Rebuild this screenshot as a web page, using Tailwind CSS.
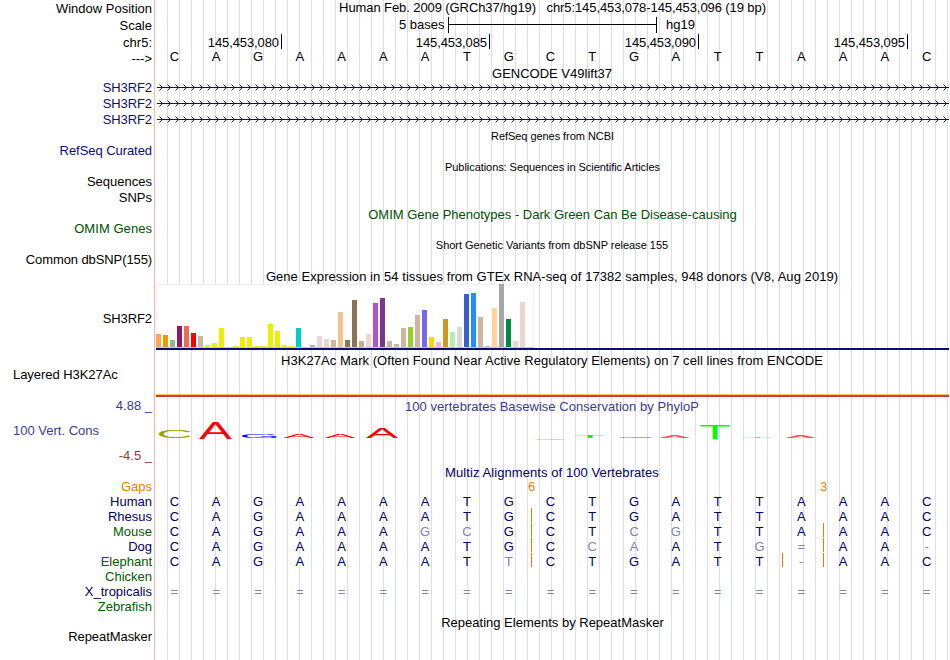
<!DOCTYPE html>
<html lang="en">
<head>
<meta charset="UTF-8">
<meta name="viewport" content="width=device-width, initial-scale=1.0">
<title>hg19 chr5:145,453,078-145,453,096</title>
<script src="https://cdn.jsdelivr.net/npm/@tailwindcss/browser@4"></script>
</head>
<body class="bg-white">
<div class="flex w-[950px] h-[660px] overflow-hidden font-['Liberation_Sans',Arial,sans-serif] text-[13px] leading-[15px] text-black whitespace-nowrap">

    <!-- Track labels -->
    <div class="flex flex-col w-[155px] shrink-0 pt-px pr-[2px] text-right border-r border-[#ffb0b0]">
        <div class="h-[17px]">Window Position</div>
        <div class="h-[17px]">Scale</div>
        <div class="h-4">chr5:</div>
        <div class="h-[29px]">---&gt;</div>
        <div class="h-4 text-[#0c0c78] tracking-[-0.1px]">SH3RF2</div>
        <div class="h-4 text-[#0c0c78] tracking-[-0.1px]">SH3RF2</div>
        <div class="h-[31px] text-[#0c0c78] tracking-[-0.1px]">SH3RF2</div>
        <div class="h-[31px] text-[#0c0c78] tracking-[-0.06px]">RefSeq Curated</div>
        <div class="h-4">Sequences</div>
        <div class="h-[31px]">SNPs</div>
        <div class="h-[31px] text-[#005000] tracking-[0.05px]">OMIM Genes</div>
        <div class="h-[59px] tracking-[-0.1px]">Common dbSNP(155)</div>
        <div class="h-14 tracking-[-0.1px]">SH3RF2</div>
        <div class="h-[31px] pl-[13px] text-left tracking-[-0.05px]">Layered H3K27Ac</div>
        <div class="h-[25px] text-[#3c3c8c]">4.88 _</div>
        <div class="h-[25px] pl-[13px] text-left text-[#3c3c8c]">100 Vert. Cons</div>
        <div class="h-[31px] text-[#8c3c3c]">-4.5 _</div>
        <div class="h-[15px] text-[#e68200]">Gaps</div>
        <div class="h-[15px] text-[#000064]">Human</div>
        <div class="h-[15px] text-[#000064]">Rhesus</div>
        <div class="h-[15px] text-[#005a00]">Mouse</div>
        <div class="h-[15px] text-[#000064]">Dog</div>
        <div class="h-[15px] text-[#005a00]">Elephant</div>
        <div class="h-[15px] text-[#005a00]">Chicken</div>
        <div class="h-[15px] text-[#000064]">X_tropicalis</div>
        <div class="h-[30px] text-[#005a00]">Zebrafish</div>
        <div class="tracking-[-0.06px]">RepeatMasker</div>
    </div>

    <!-- Tracks, with a guide line every 12px -->
    <div class="flex flex-col w-[795px] shrink-0 text-center bg-[repeating-linear-gradient(90deg,#dcdcfa_0_1px,transparent_1px_12px)] bg-[position:12px_0] bg-no-repeat">
        <div class="h-[17px] whitespace-pre tracking-[-0.09px]">Human Feb. 2009 (GRCh37/hg19)   chr5:145,453,078-145,453,096 (19 bp)</div>

        <div class="flex h-[17px] pl-[244px]">
            <div class="w-[49px] text-left">5 bases</div>
            <div class="w-[209px] h-4 pt-[7px] border-x border-black"><div class="h-px bg-black"></div></div>
            <div class="pl-[9px]">hg19</div>
        </div>

        <div class="flex h-[15px] text-right tracking-[-0.1px]">
            <div class="w-[127px] pt-px pr-[2px] border-r border-black">145,453,080</div>
            <div class="w-[208px] pt-px pr-[2px] border-r border-black">145,453,085</div>
            <div class="w-[209px] pt-px pr-[2px] border-r border-black">145,453,090</div>
            <div class="w-[209px] pt-px pr-[2px] border-r border-black">145,453,095</div>
        </div>

        <div class="-ml-[1.5px] w-[794px] h-[17px] grid grid-cols-19 bases" data-seq="CAGAAAATGCTGATTAAAC"></div>

        <div class="h-[14px] pr-px">GENCODE V49lift37</div>
        <svg class="block ml-[2px] w-[793px] h-12 shrink-0" viewBox="0 0 793 48">
            <defs>
                <pattern id="strand" width="8" height="16" patternUnits="userSpaceOnUse">
                    <path d="M0 7.5H8" stroke="#0c0c78"/>
                    <path d="M2.5 4.5l3 3l-3 3" fill="none" stroke="#0c0c78" stroke-width=".9"/>
                </pattern>
            </defs>
            <rect width="792" height="48" fill="url(#strand)"/>
        </svg>

        <div class="h-[33px] pt-[2px] text-[11px] leading-[13px] tracking-[-0.05px]">RefSeq genes from NCBI</div>
        <div class="h-[46px] text-[11px] leading-[13px] tracking-[-0.06px]">Publications: Sequences in Scientific Articles</div>
        <div class="h-8 text-[#005000]">OMIM Gene Phenotypes - Dark Green Can Be Disease-causing</div>
        <div class="h-[30px] pr-px text-[11px] leading-[13px] tracking-[-0.02px]">Short Genetic Variants from dbSNP release 155</div>

        <div class="h-[15px] pr-px tracking-[0.055px]">Gene Expression in 54 tissues from GTEx RNA-seq of 17382 samples, 948 donors (V8, Aug 2019)</div>
        <div class="ml-px h-[66px] w-[793px] border-b-2 border-[#0c0c78]">
            <div id="gtex" class="flex items-end gap-[2px] w-[378px] h-16 bg-white shadow-[inset_0_1px_#f0f0f0,inset_1px_0_#f0f0f0,inset_-1px_0_#f0f0f0] border-b border-[#c8c8c8]"></div>
        </div>

        <div class="h-11 pt-[3px] pr-px tracking-[0.05px]">H3K27Ac Mark (Often Found Near Active Regulatory Elements) on 7 cell lines from ENCODE</div>
        <div class="ml-px w-[793px] h-[3px] border-t border-[#f7c868] bg-[#d03c40]"></div>

        <div class="h-[25px] pt-[2px] pr-px text-[#3c3c8c] tracking-[0.04px]">100 vertebrates Basewise Conservation by PhyloP</div>
        <svg id="phylop" class="block w-[795px] h-[43px] shrink-0 overflow-visible" viewBox="155 422 795 43"></svg>

        <div class="h-[14px] pr-px text-[#000064] tracking-[0.08px]">Multiz Alignments of 100 Vertebrates</div>
        <div class="-ml-[1.5px] w-[794px] h-[15px] grid grid-cols-19 text-[#e68200]">
            <div class="col-start-9 col-span-2 pl-[4px]">6</div>
            <div class="col-start-16 col-span-2 pl-[3px]">3</div>
        </div>
        <!-- lower case = differs from human, | = insert before the next base -->
        <div class="-ml-[1.5px] w-[794px] h-[15px] grid grid-cols-19 text-[#000064] bases" data-seq="CAGAAAATGCTGATTAAAC"></div>
        <div class="-ml-[1.5px] w-[794px] h-[15px] grid grid-cols-19 text-[#000064] bases" data-seq="CAGAAAATG|CTGATTAAAC"></div>
        <div class="-ml-[1.5px] w-[794px] h-[15px] grid grid-cols-19 text-[#000064] bases" data-seq="CAGAAAgcG|CTcgTTA|AAC"></div>
        <div class="-ml-[1.5px] w-[794px] h-[15px] grid grid-cols-19 text-[#000064] bases" data-seq="CAGAAAATG|CcaATg=|AA-"></div>
        <div class="-ml-[1.5px] w-[794px] h-[15px] grid grid-cols-19 text-[#000064] bases" data-seq="CAGAAAATt|CTGATT|-|AAC"></div>
        <div class="h-[15px]"></div>
        <div class="-ml-[1.5px] w-[794px] h-[15px] grid grid-cols-19 text-[#000064] bases" data-seq="==================="></div>
        <div class="h-4"></div>
        <div>Repeating Elements by RepeatMasker</div>
    </div>
</div>

<script>
// Sequence rows
document.querySelectorAll('.bases').forEach(function(row) {
    let insert = false;
    for (const ch of row.dataset.seq) {
        if (ch === '|') {
            insert = true;
            continue;
        }
        const cell = document.createElement('div');
        cell.className = /[a-z=-]/.test(ch) ? 'relative text-[#8282b4]' : 'relative';
        cell.textContent = ch.toUpperCase();
        if (insert) {
            cell.innerHTML += '<span class="absolute left-[1.25px] -top-px w-px h-[14px] bg-[#e08000]"></span>';
            insert = false;
        }
        row.appendChild(cell);
    }
});

// GTEx tissues: [height, colour]
const tissues = [
    [13, '#ffa54f'], [12, '#ee9a00'], [7, '#8fbc8f'], [21, '#8b1c62'], [21, '#ee6a50'], [14, '#ff0000'],
    [11, '#cdb79e'], [2, '#eeee00'], [4, '#eeee00'], [19, '#eeee00'], [0, '#eeee00'], [1, '#eeee00'],
    [10, '#eeee00'], [10, '#eeee00'], [1, '#eeee00'], [1, '#eeee00'], [23, '#eeee00'], [16, '#eeee00'],
    [2, '#eeee00'], [1, '#eeee00'], [19, '#00cdcd'], [0, '#ee82ee'], [2, '#9ac0cd'], [11, '#eed5d2'],
    [8, '#eed5d2'], [7, '#cdb79e'], [35, '#eec591'], [7, '#8b7355'], [47, '#8b7355'], [6, '#cdaa7d'],
    [13, '#eed5d2'], [44, '#b452cd'], [49, '#7a378b'], [6, '#cdb79e'], [3, '#cdb79e'], [19, '#cdb79e'],
    [20, '#9acd32'], [32, '#cdb79e'], [37, '#7a67ee'], [10, '#ffd700'], [5, '#ffb6c1'], [28, '#cd9b1d'],
    [15, '#b4eeb4'], [20, '#d9d9d9'], [53, '#3a5fcd'], [54, '#1e90ff'], [30, '#cdb79e'], [1, '#cdb79e'],
    [39, '#ffd39b'], [63, '#a6a6a6'], [28, '#008b45'], [6, '#eed5d2'], [45, '#eed5d2'], [0, '#ff00ff']
];
document.getElementById('gtex').innerHTML = tissues.map(function(t) {
    return '<div class="w-[5px] shrink-0" style="height:' + t[0] + 'px;background:' + t[1] + '"></div>';
}).join('');

// PhyloP letters: [base, left, right, top, bottom]
const logo = [
    ['C', 158.7, 191, 430, 438], ['A', 199, 231.7, 422, 439], ['G', 242, 277, 434, 438], ['A', 283.3, 314.7, 434, 438],
    ['A', 324.3, 356, 434, 438], ['A', 366, 398, 428, 438], ['C', 534.7, 566, 439, 440], ['T', 575, 605, 435, 438],
    ['G', 618.7, 653, 437, 438], ['A', 659, 690, 436, 438], ['T', 700, 730, 425, 439], ['T', 742, 772, 437, 438],
    ['A', 785, 816, 436, 438]
];
// glyph extents for a 10px font: left, right, top, bottom
const glyphs = {
    A: [0.02, 6.65, 6.88, 0, '#ff0000'],
    C: [0.5, 6.83, 6.98, 0.1, '#a0a000'],
    G: [0.5, 7.15, 6.98, 0.1, '#0000ff'],
    T: [0.2, 5.9, 6.88, 0, '#00ff00']
};
document.getElementById('phylop').innerHTML = logo.map(function(l) {
    const g = glyphs[l[0]];
    const sx = (l[2] - l[1]) / (g[1] - g[0]);
    const sy = (l[4] - l[3]) / (g[2] + g[3]);
    const x = l[1] - g[0] * sx;
    const y = l[4] - g[3] * sy;
    // scores near zero fade out
    const opacity = l[4] - l[3] < 3 ? 0.7 : 1;
    return '<text font-size="10" fill="' + g[4] + '" opacity="' + opacity + '" transform="translate(' + x + ' ' + y + ') scale(' + sx + ' ' + sy + ')">' + l[0] + '</text>';
}).join('');
</script>
</body>
</html>
